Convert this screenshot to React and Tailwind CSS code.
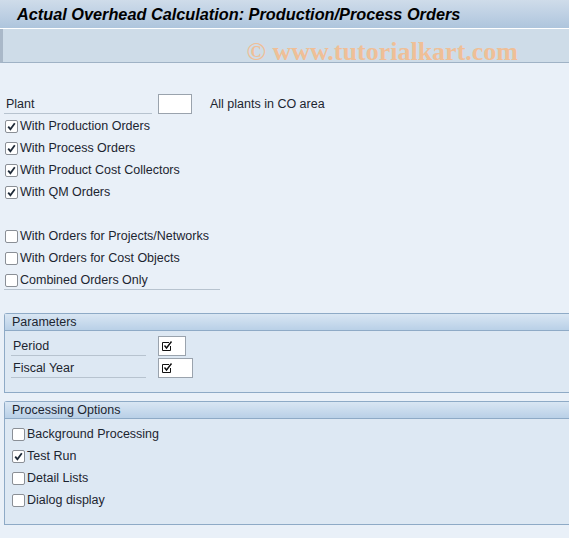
const font = { fontFamily: '"Liberation Sans", Arial, sans-serif' };

const CheckBox = ({checked}) => (
    <span className="w-[13px] h-[13px] shrink-0 bg-white border border-[#8a8f96] rounded-[2px] flex items-center justify-center">
        {checked && (
            <svg width="9" height="9" viewBox="0 0 9 9">
                <path d="M1.2 4.6 L3.4 7.2 L7.8 1.2" fill="none" stroke="#1e2a38" strokeWidth="1.8"/>
            </svg>
        )}
    </span>
);

const ReqIcon = () => (
    <svg width="13" height="12" viewBox="0 0 13 12">
        <path d="M1.5 2.5 H8 M1.5 2.5 V10.5 H9.5 V6" fill="none" stroke="#111" strokeWidth="1"/>
        <path d="M3.5 5.5 L5.5 8 L10.5 1.5" fill="none" stroke="#111" strokeWidth="1.4"/>
    </svg>
);

const CheckRow = ({label, checked, pl = "pl-[5px]"}) => (
    <div className={`h-[22px] flex items-center gap-[2px] ${pl}`}>
        <CheckBox checked={checked}/>
        <span className="text-[12.5px] text-[#1c2530] pt-[1px]">{label}</span>
    </div>
);

const FieldRow = ({label, inputW}) => (
    <div className="h-[22px] flex items-center pl-[6px]">
        <div className="w-[135px] h-[19px] border-b border-[#b7c3cf] flex items-center pl-[2px] pt-[2px] text-[12.5px] text-[#1c2530]">
            {label}
        </div>
        <div className={`ml-[12px] h-[20px] ${inputW} bg-white border border-[#9aa3ad] flex items-center pl-[2px]`}>
            <ReqIcon/>
        </div>
    </div>
);

const Group = ({title, children, h}) => (
    <div className={`ml-[4px] w-[568px] ${h} border border-r-0 border-[#8eaac6] bg-[#dde8f3] rounded-tl-[3px]`}>
        <div className="h-[17px] bg-gradient-to-b from-[#d9e6f3] to-[#b9d0e7] border-b border-[#8eaac6] flex items-center pl-[7px] text-[12.5px] text-[#1c2530]">
            {title}
        </div>
        <div className="pt-[4px]">{children}</div>
    </div>
);

export default function App() {
    return (
        <div className="w-[569px] h-[538px] bg-[#e9f0f8] overflow-hidden" style={font}>
            <div className="h-[29px] bg-gradient-to-b from-[#cfdcea] to-[#aec5dd] border-b border-white flex items-center pl-[17px]">
                <h1 className="text-[16.3px] font-bold italic text-black" style={font}>
                    Actual Overhead Calculation: Production/Process Orders
                </h1>
            </div>
            <div className="h-[34px] bg-[#cedce8] border-l-[3px] border-l-[#a9b8c8] border-b border-b-[#9fb2c5] flex items-end justify-end pr-[51px]">
                <span className="text-[26px] font-bold text-[#efbf97] leading-none -mb-[3px]" style={{fontFamily: '"Liberation Serif", "Times New Roman", serif'}}>
                    © www.tutorialkart.com
                </span>
            </div>

            <div className="pt-[30px]">
                <div className="h-[22px] flex items-center pl-[4px]">
                    <div className="w-[148px] h-[19px] border-b border-[#b7c3cf] flex items-center pl-[2px] pt-[2px] text-[12.5px] text-[#1c2530]">Plant</div>
                    <div className="ml-[6px] w-[34px] h-[20px] bg-white border border-[#9aa3ad]"/>
                    <span className="ml-[18px] text-[12.5px] text-[#1c2530] pt-[1px]">All plants in CO area</span>
                </div>
                <CheckRow label="With Production Orders" checked/>
                <CheckRow label="With Process Orders" checked/>
                <CheckRow label="With Product Cost Collectors" checked/>
                <CheckRow label="With QM Orders" checked/>
                <div className="h-[22px]"/>
                <CheckRow label="With Orders for Projects/Networks"/>
                <CheckRow label="With Orders for Cost Objects"/>
                <CheckRow label="Combined Orders Only"/>
                <div className="ml-[4px] w-[216px] border-b border-[#b7c3cf] -mt-[2px]"/>
            </div>

            <div className="mt-[23px]">
                <Group title="Parameters" h="h-[80px]">
                    <FieldRow label="Period" inputW="w-[28px]"/>
                    <FieldRow label="Fiscal Year" inputW="w-[35px]"/>
                </Group>
            </div>

            <div className="mt-[8px]">
                <Group title="Processing Options" h="h-[124px]">
                    <CheckRow label="Background Processing" pl="pl-[7px]"/>
                    <CheckRow label="Test Run" checked pl="pl-[7px]"/>
                    <CheckRow label="Detail Lists" pl="pl-[7px]"/>
                    <CheckRow label="Dialog display" pl="pl-[7px]"/>
                </Group>
            </div>
        </div>
    );
}
